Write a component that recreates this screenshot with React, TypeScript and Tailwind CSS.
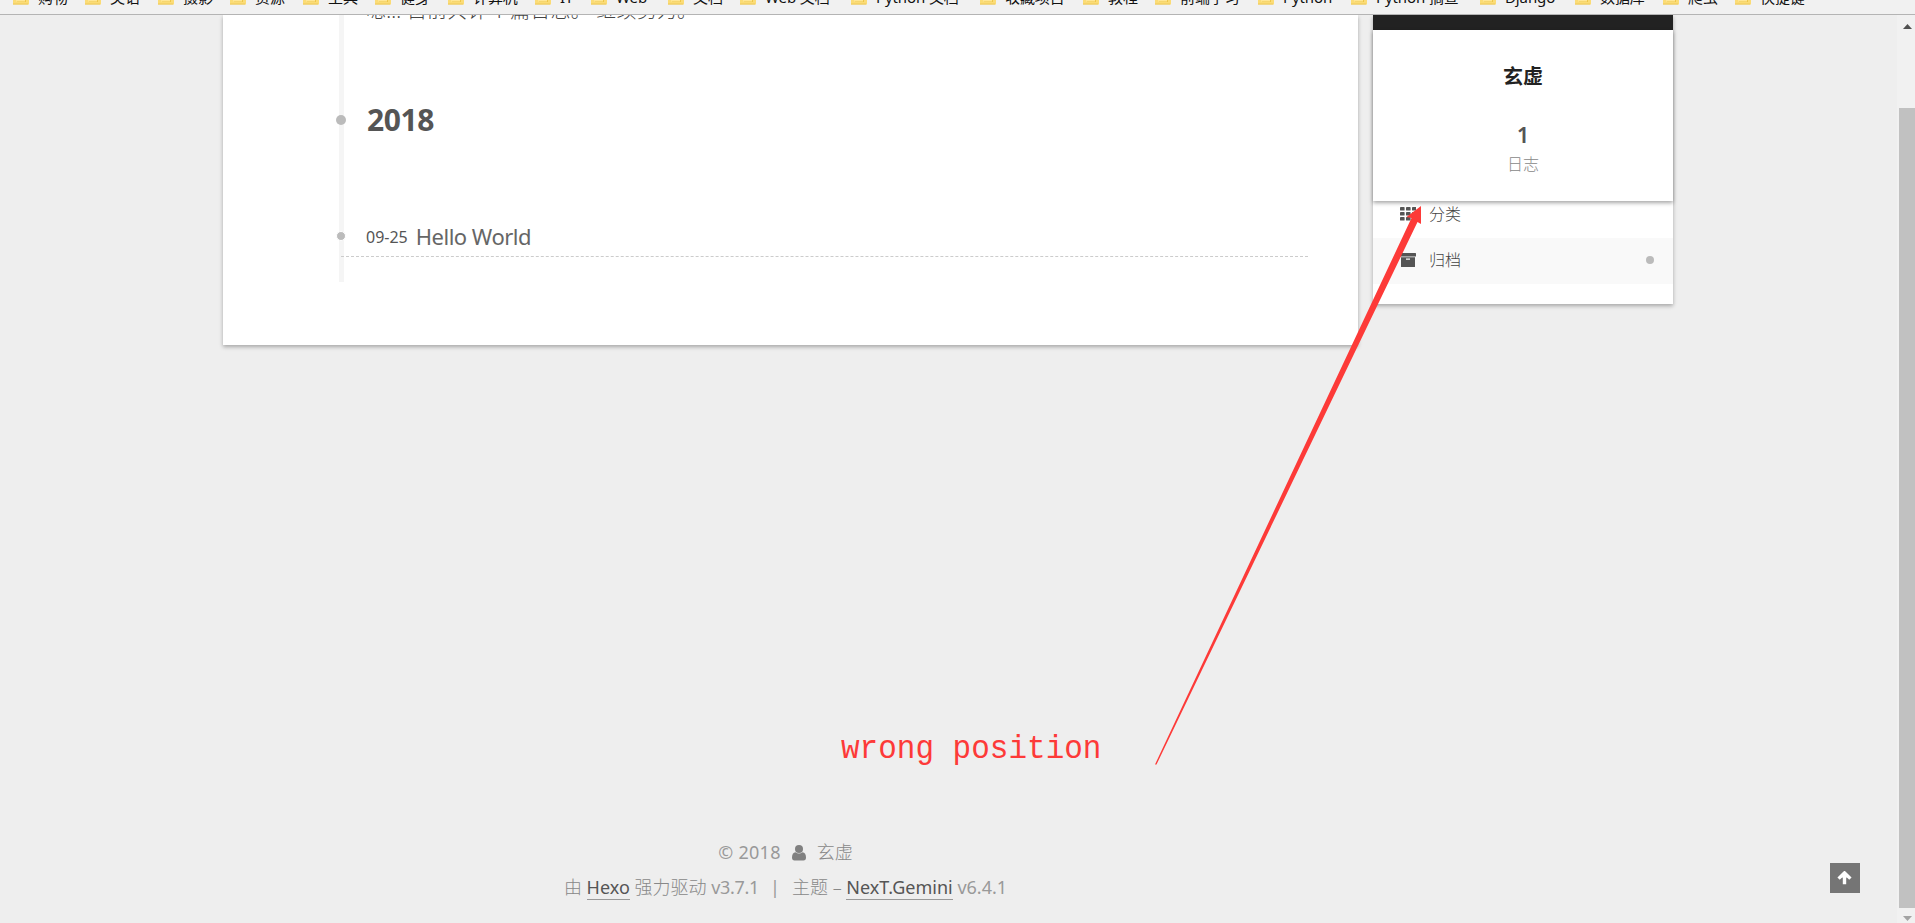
import React from "react";

const cjk = "font-['Noto_Sans','Noto_Sans_CJK_SC',sans-serif]";

const bookmarks: { label: string; width: number }[] = [
  { label: "购物", width: 72 },
  { label: "英语", width: 73 },
  { label: "摄影", width: 72 },
  { label: "资源", width: 73 },
  { label: "工具", width: 72 },
  { label: "健身", width: 73 },
  { label: "计算机", width: 87 },
  { label: "IT", width: 56 },
  { label: "Web", width: 77 },
  { label: "文档", width: 72 },
  { label: "Web 文档", width: 111 },
  { label: "Python 文档", width: 129 },
  { label: "收藏项目", width: 103 },
  { label: "教程", width: 72 },
  { label: "前端学习", width: 103 },
  { label: "Python", width: 93 },
  { label: "Python 摘查", width: 129 },
  { label: "Django", width: 95 },
  { label: "数据库", width: 88 },
  { label: "爬虫", width: 72 },
  { label: "快捷键", width: 90 },
];

function Folder() {
  return (
    <svg width="16" height="16" viewBox="0 0 16 16" className="shrink-0">
      <path d="M0 1h6l2 2h8v12.500H0z" fill="#fbdc76" />
      <path d="M0 14.500h15v1H0z" fill="#ecc95a" />
      <path d="M12 4h1v9H4v-1h8z" fill="#eec64a" />
      <path d="M3 4h9v8.500H3z" fill="#ffe694" />
    </svg>
  );
}

function GridIcon() {
  return (
    <svg width="16" height="14" viewBox="0 0 16 14" fill="currentColor">
      {[0, 5, 10].map((y) =>
        [0, 6, 12].map((x) => <rect key={`${x}-${y}`} x={x} y={y} width="4.600" height="3.600" rx="0.700" />),
      )}
    </svg>
  );
}

function ArchiveIcon() {
  return (
    <svg width="16" height="14" viewBox="0 0 16 14" fill="currentColor">
      <rect x="0" y="0" width="16" height="3.500" rx="0.500" />
      <path fillRule="evenodd" d="M1 4.300h14V13.500q0 .5-.5.5H1.500q-.5 0-.5-.5zM6 5.500v1.200h4V5.500z" />
    </svg>
  );
}

function UserIcon() {
  return (
    <svg width="14" height="16" viewBox="0 0 14 16" fill="#808080">
      <circle cx="7" cy="4" r="4" />
      <path d="M3.500 7.200Q7 10 10.500 7.200Q14 7.800 14 12.500Q14 15.500 11.500 15.500H2.500Q0 15.500 0 12.500Q0 7.800 3.500 7.200z" />
    </svg>
  );
}

function UpIcon() {
  return (
    <svg width="15" height="14" viewBox="0 0 15 14" className="-ml-px">
      <path d="M1.600 7.600L7.500 1.900L13.400 7.600M7.500 2.500V13.200" fill="none" stroke="#fff" strokeWidth="3.400" />
      <path d="M7.500 1L12 6.500H3z" fill="#fff" />
    </svg>
  );
}

function BookmarkBar() {
  return (
    <header className="flex h-[15px] shrink-0 items-end overflow-hidden border-b border-[#b4b4b4] bg-[#f1f1f1] pl-[13px]">
      {bookmarks.map((b) => (
        <div key={b.label} className="flex h-6 shrink-0 items-start gap-[9px]" style={{ width: b.width }}>
          <div className="-mt-[1px]"><Folder /></div>
          <span className="-mt-[5px] whitespace-nowrap text-[15px] leading-6 tracking-[-0.1px] text-[#111]">{b.label}</span>
        </div>
      ))}
    </header>
  );
}

function Timeline() {
  return (
    <main className="relative h-[330px] w-[1135px] shrink-0 bg-white pl-[116px] shadow-[0_2px_4px_rgba(0,0,0,0.3)]">
      <div className="h-[267px] w-[969px] border-l-[5px] border-[#f5f5f5]">
        <div className="h-[70px] overflow-hidden pl-[22px]">
          <p className="-mt-[18px] text-[20px] leading-7 font-light tracking-[0.2px] text-[#444]">嗯..! 目前共计 1 篇日志。 继续努力。</p>
        </div>
        <div className="-ml-[8px] flex h-[70px] items-center">
          <span className="size-[10px] rounded-full bg-[#bbb]" />
          <h2 className="ml-[21px] text-[30px] leading-none font-bold tracking-[-0.4px] text-[#555]">2018</h2>
        </div>
        <div className="-ml-[3px] mt-[57px] flex h-[45px] items-start border-b border-dashed border-[#ccc]">
          <span className="mt-[19px] -ml-[5px] size-[10px] shrink-0 rounded-full border border-white bg-[#bbb]" />
          <time className="mt-[13px] ml-[20px] text-[16px] leading-6 text-[#555]">09-25</time>
          <span className="mt-[9px] ml-[8px] text-[22px] leading-[30px] tracking-[-0.5px] text-[#666]">Hello World</span>
        </div>
      </div>
    </main>
  );
}

function Sidebar() {
  return (
    <aside className="relative h-[289px] w-[300px] shrink-0 bg-white shadow-[0_2px_4px_rgba(0,0,0,0.3)]">
      <div className="h-[15px] bg-[#222]" />
      <section className="flex h-[171px] flex-col items-center bg-white pt-[32px] shadow-[0_2px_4px_rgba(0,0,0,0.35)]">
        <h1 className="text-[20px] leading-[30px] font-bold text-[#222]">玄虚</h1>
        <strong className="mt-[27px] text-[22px] leading-[30px] font-semibold text-[#555]">1</strong>
        <span className="mt-[3px] text-base leading-6 font-light text-[#888]">日志</span>
      </section>
      <nav className="text-base font-light text-[#444]">
        <div className="flex h-[37px] items-start pt-[1px] pl-[27px]">
          <span className="mt-[5px] text-[#555]"><GridIcon /></span>
          <span className="ml-[13px] leading-6">分类</span>
        </div>
        <div className="flex h-[46px] items-start bg-[#f9f9f9] pt-[10px] pr-[19px] pl-[27px]">
          <span className="mt-[5px] text-[#555]"><ArchiveIcon /></span>
          <span className="ml-[13px] leading-6">归档</span>
          <i className="mt-[8px] ml-auto size-2 rounded-full bg-[#bbb]" />
        </div>
      </nav>
    </aside>
  );
}

function Footer() {
  return (
    <footer className="flex w-[443px] flex-col items-center text-[18px] leading-[35px] whitespace-pre text-[#888]">
      <div className="flex items-center font-light">
        <span className="font-normal tracking-[0.3px] text-[#999]">© 2018</span>
        <span className="mr-[11px] ml-[11px]"><UserIcon /></span>
        <span>玄虚</span>
      </div>
      <div className="flex items-center">
        <span className="font-light">由 </span>
        <a className="border-b border-[#999] leading-[24px] text-[#555]">Hexo</a>
        <span className="font-light"> 强力驱动 </span>
        <span className="tracking-[-0.3px] text-[#999]">v3.7.1</span>
        <span className="mr-[12px] ml-[11px] text-[#999]">|</span>
        <span className="font-light">主题 – </span>
        <a className="border-b border-[#999] leading-[24px] text-[#555]">NexT.Gemini</a>
        <span className="text-[#999]"> v6.4.1</span>
      </div>
    </footer>
  );
}

function Scrollbar() {
  return (
    <div className="flex w-[18px] shrink-0 flex-col items-end bg-[#f1f1f1]">
      <div className="flex h-[93px] w-4 justify-center pt-[9px]">
        <svg width="9" height="5" viewBox="0 0 9 5"><path d="M0 5L4.5 0L9 5z" fill="#505050" /></svg>
      </div>
      <div className="h-[800px] w-4 bg-[#c1c1c1]" />
      <div className="flex w-4 justify-center pt-2">
        <svg width="9" height="5" viewBox="0 0 9 5"><path d="M0 0L4.5 5L9 0z" fill="#a3a3a3" /></svg>
      </div>
    </div>
  );
}

export default function App() {
  return (
    <div className={`relative flex h-[923px] w-[1915px] flex-col overflow-hidden bg-[#eee] ${cjk}`}>
      <BookmarkBar />
      <div className="flex min-h-0 flex-1 overflow-hidden">
        <div className="flex w-[1897px] flex-col">
          <div className="flex items-start gap-[15px] pl-[223px]">
            <Timeline />
            <Sidebar />
          </div>
          <div className="mt-auto flex items-start justify-between pr-[37px] pb-[18px] pl-[564px]">
            <Footer />
            <button className="mt-[28px] flex size-[30px] items-center justify-center bg-[#757575]">
              <UpIcon />
            </button>
          </div>
        </div>
        <Scrollbar />
      </div>
      <svg className="absolute top-0 left-0" width="1915" height="923" viewBox="0 0 1915 923">
        <path d="M1155 764.500L1411.500 218L1406.500 217L1421 206L1421 224L1417.500 222L1156.500 764.500z" fill="#fd3a38" />
      </svg>
      <p className="absolute top-[729px] left-[841px] origin-center scale-y-[1.07] font-['Liberation_Mono',monospace] text-[31px] leading-10 text-[#fd3a38]">wrong position</p>
    </div>
  );
}
